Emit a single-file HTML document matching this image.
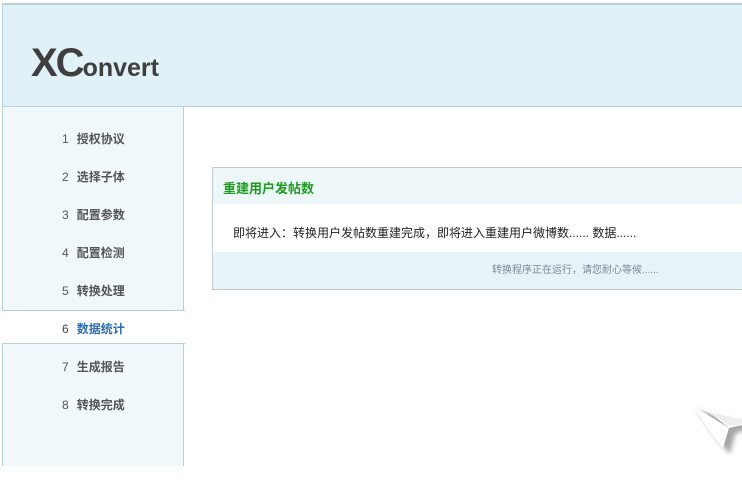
<!DOCTYPE html>
<html><head><meta charset="utf-8"><style>
*{margin:0;padding:0;box-sizing:border-box}
body{width:742px;height:499px;background:#fff;position:relative;overflow:hidden;font-family:"Liberation Sans","Noto Sans CJK SC",sans-serif}
.hdr{position:absolute;left:2px;top:3px;width:760px;height:104px;background:#e0f1f8;border-top:2px solid #b7d1da;border-left:1px solid #b7d1da;border-bottom:1px solid #b3d2dd}
.logo{position:absolute;left:31px;top:41px;color:#3f3f3f;font-weight:bold;white-space:nowrap}
.logo .x{font-size:40px;letter-spacing:-2px}
.logo .r{font-size:25px}
.side{position:absolute;left:2px;top:107px;width:182px;height:359px;background:#f0f8fb;border-left:1px solid #b3d2dd;border-right:1px solid #b3d2dd}
.it{position:absolute;left:0;width:181px;height:34px;font-size:12px;color:#555;font-weight:bold;line-height:34px;padding-left:59px}
.it span{font-weight:normal;margin-right:8px}
.act{background:#fff;border-top:1px solid #b3d2dd;border-bottom:1px solid #b3d2dd;color:#2a6db5;width:183px}
.act span{color:#444}
.pnl{position:absolute;left:212px;top:167px;width:540px;height:123px;border:1px solid #c4cbce;background:#fff}
.ph{height:36px;background:#edf7fa;color:#1c9c1c;font-weight:bold;font-size:13px;line-height:42px;padding-left:10px}
.pb{height:48px;font-size:12px;color:#222;line-height:58px;padding-left:20px}
.pf{height:37px;background:#e6f4f9;font-size:10px;color:#7a8a93;line-height:38px;padding-left:279px}
</style></head><body>
<div class="hdr"></div>
<div class="logo"><span class="x">XC</span><span class="r">onvert</span></div>
<div class="side">
<div class="it" style="top:15px"><span>1</span>授权协议</div>
<div class="it" style="top:53px"><span>2</span>选择子体</div>
<div class="it" style="top:91px"><span>3</span>配置参数</div>
<div class="it" style="top:129px"><span>4</span>配置检测</div>
<div class="it" style="top:167px"><span>5</span>转换处理</div>
<div class="it act" style="top:203px;left:-1px;padding-left:60px;line-height:36px"><span>6</span>数据统计</div>
<div class="it" style="top:243px"><span>7</span>生成报告</div>
<div class="it" style="top:281px"><span>8</span>转换完成</div>
</div>
<div class="pnl">
<div class="ph">重建用户发帖数</div>
<div class="pb">即将进入：转换用户发帖数重建完成，即将进入重建用户微博数...... 数据......</div>
<div class="pf">转换程序正在运行，请您耐心等候......</div>
</div>
<svg style="position:absolute;left:685px;top:398px" width="57" height="60" viewBox="0 0 57 60">
<defs><filter id="f" x="-30%" y="-30%" width="160%" height="160%"><feGaussianBlur stdDeviation="2.5"/></filter></defs>
<g filter="url(#f)" fill="#888" opacity="0.75"><polygon points="12,12 70,28 50,36 45,56 34,44"/></g>
<polygon points="8,8 70,24 44,30 24,14" fill="#fff"/>
<polygon points="8,8 44,30 38,50 28,38" fill="#fff"/>
<polygon points="24,14 70,24 44,28" fill="#eee"/>
</svg>
</body></html>
